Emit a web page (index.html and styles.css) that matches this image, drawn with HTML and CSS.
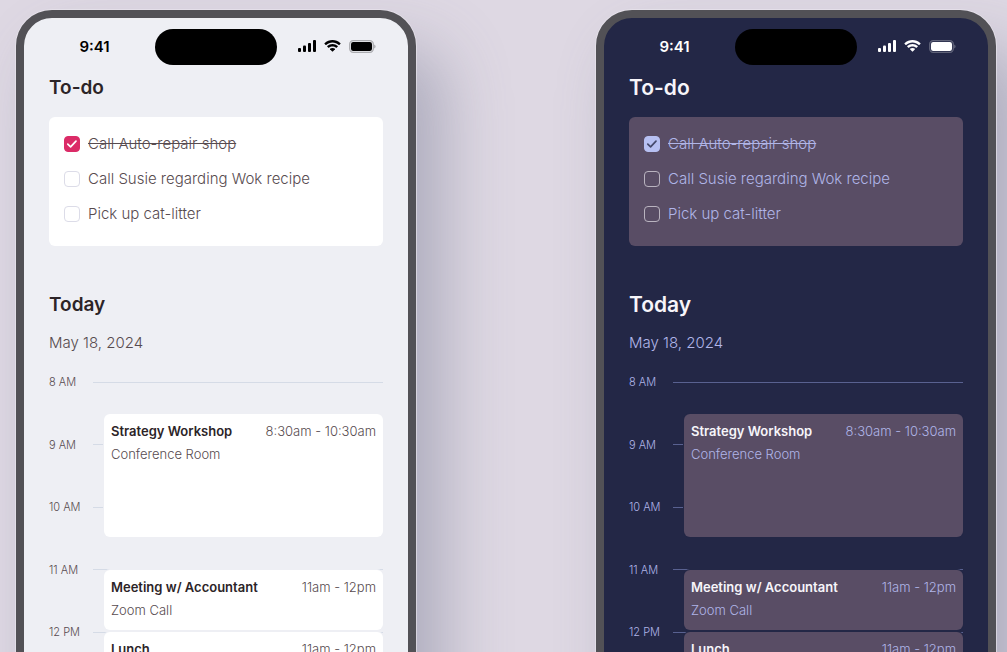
FILE: index.html
```html
<!DOCTYPE html>
<html lang="en">
<head>
<meta charset="utf-8">
<meta name="viewport" content="width=device-width, initial-scale=1">
<title>To-do and calendar</title>
<link rel="stylesheet" href="styles.css">
</head>
<body>
<svg class="sprite" aria-hidden="true">
  <symbol id="signal" viewBox="0 0 18 12">
    <rect x="0" y="8" width="3" height="4" rx="1"/><rect x="5" y="5.5" width="3" height="6.5" rx="1"/><rect x="10" y="3" width="3" height="9" rx="1"/><rect x="15" y="0" width="3" height="12" rx="1"/>
  </symbol>
  <symbol id="wifi" viewBox="0 0 17 12">
    <path d="M8.5 2.5c2.4 0 4.6.9 6.3 2.5.1.1.3.1.5 0l1.2-1.2c.2-.2.2-.4 0-.6C12-1 5-1 .5 3.2c-.2.2-.2.4 0 .6L1.700 5c.2.1.4.1.5 0 1.700-1.600 3.900-2.500 6.300-2.500z"/>
    <path d="M8.500 6.400c1.300 0 2.600.5 3.600 1.400.1.1.3.1.5 0l1.200-1.200c.2-.2.200-.4 0-.6-3-2.800-7.600-2.800-10.600 0-.2.2-.2.4 0 .6l1.200 1.200c.1.1.3.1.5 0 1-.9 2.300-1.400 3.600-1.400z"/>
    <path d="M11 9.300c.1-.2.1-.4 0-.5-1.400-1.200-3.500-1.200-5 0-.1.100-.1.3 0 .5l2.200 2.200c.2.200.400.200.6 0z"/>
  </symbol>
  <symbol id="battery" viewBox="0 0 27 13">
    <rect x="0.7" y="0.7" width="23.600" height="11.600" rx="3.500" fill="none" stroke="currentColor" stroke-width="1.300" opacity=".28"/>
    <rect x="2" y="2" width="21" height="9" rx="2.200"/>
    <path d="M25.300 4.500v4c1.600-.7 1.600-3.300 0-4z" opacity=".35"/>
  </symbol>
  <symbol id="check" viewBox="0 0 16 16">
    <path d="M3.800 8.200l2.800 2.600 5.400-5.600" fill="none" stroke="currentColor" stroke-width="1.700" stroke-linecap="round" stroke-linejoin="round"/>
  </symbol>
</svg>
<main class="stage">
  <section class="phone light">
    <header class="status">
      <span class="time">9:41</span>
      <span class="island"></span>
      <span class="indicators">
        <svg class="signal"><use href="#signal"/></svg>
        <svg class="wifi"><use href="#wifi"/></svg>
        <svg class="battery"><use href="#battery"/></svg>
      </span>
    </header>
    <div class="content">
      <h2 class="heading">To-do</h2>
      <div class="todos">
        <label class="todo"><input class="box" type="checkbox" checked><svg class="check"><use href="#check"/></svg><span class="task">Call Auto-repair shop</span></label>
        <label class="todo"><input class="box" type="checkbox"><svg class="check"><use href="#check"/></svg><span class="task">Call Susie regarding Wok recipe</span></label>
        <label class="todo"><input class="box" type="checkbox"><svg class="check"><use href="#check"/></svg><span class="task">Pick up cat-litter</span></label>
      </div>
      <h2 class="heading">Today</h2>
      <p class="date">May 18, 2024</p>
      <div class="timeline">
        <div class="hour h8">8 AM</div>
        <div class="hour h9">9 AM</div>
        <div class="hour h10">10 AM</div>
        <div class="hour h11">11 AM</div>
        <div class="hour h12">12 PM</div>
        <article class="event workshop"><div class="event-top"><h3 class="title">Strategy Workshop</h3><span class="when">8:30am - 10:30am</span></div><p class="place">Conference Room</p></article>
        <article class="event meeting"><div class="event-top"><h3 class="title">Meeting w/ Accountant</h3><span class="when">11am - 12pm</span></div><p class="place">Zoom Call</p></article>
        <article class="event lunch"><div class="event-top"><h3 class="title">Lunch</h3><span class="when">11am - 12pm</span></div></article>
      </div>
    </div>
  </section>
  <section class="phone dark">
    <header class="status">
      <span class="time">9:41</span>
      <span class="island"></span>
      <span class="indicators">
        <svg class="signal"><use href="#signal"/></svg>
        <svg class="wifi"><use href="#wifi"/></svg>
        <svg class="battery"><use href="#battery"/></svg>
      </span>
    </header>
    <div class="content">
      <h2 class="heading">To-do</h2>
      <div class="todos">
        <label class="todo"><input class="box" type="checkbox" checked><svg class="check"><use href="#check"/></svg><span class="task">Call Auto-repair shop</span></label>
        <label class="todo"><input class="box" type="checkbox"><svg class="check"><use href="#check"/></svg><span class="task">Call Susie regarding Wok recipe</span></label>
        <label class="todo"><input class="box" type="checkbox"><svg class="check"><use href="#check"/></svg><span class="task">Pick up cat-litter</span></label>
      </div>
      <h2 class="heading">Today</h2>
      <p class="date">May 18, 2024</p>
      <div class="timeline">
        <div class="hour h8">8 AM</div>
        <div class="hour h9">9 AM</div>
        <div class="hour h10">10 AM</div>
        <div class="hour h11">11 AM</div>
        <div class="hour h12">12 PM</div>
        <article class="event workshop"><div class="event-top"><h3 class="title">Strategy Workshop</h3><span class="when">8:30am - 10:30am</span></div><p class="place">Conference Room</p></article>
        <article class="event meeting"><div class="event-top"><h3 class="title">Meeting w/ Accountant</h3><span class="when">11am - 12pm</span></div><p class="place">Zoom Call</p></article>
        <article class="event lunch"><div class="event-top"><h3 class="title">Lunch</h3><span class="when">11am - 12pm</span></div></article>
      </div>
    </div>
  </section>
</main>
</body>
</html>
```

FILE: styles.css
```css
* { box-sizing: border-box; }

body {
  margin: 0;
  height: 100vh;
  overflow: hidden;
  background: #ded8e3;
  font-family: Inter, "Liberation Sans", sans-serif;
}

h2, h3, p { margin: 0; }

.sprite { display: none; }

.stage {
  display: flex;
  align-items: flex-start;
  gap: 180px;
  padding: 10px 11px 0 16px;
}

.phone {
  flex: 1;
  min-width: 0;
  border: 8px solid #525156;
  border-radius: 36px;
  background: var(--screen);
  color: var(--text);
  font-weight: 300;
  box-shadow: 0 0 0 1px #ebe8ef99, 28px 40px 64px #70758e70;
}

.light {
  --screen: #eeeff4;
  --card: #ffffff;
  --strong: #2c2427;
  --text: #574b4f;
  --line: #d5dbe6;
  --status: #000000;
  --box-line: #dcdce8;
  --accent: #db2b67;
  --mark: #ffffff;
  --heading-size: 19px;
}

.dark {
  --screen: #232746;
  --card: #594d65;
  --strong: #f7f5fa;
  --text: #b0b5e8;
  --line: #596190;
  --status: #ffffff;
  --box-line: #b9b3bf;
  --accent: #b7c0f2;
  --mark: #45496b;
  --heading-size: 21px;
}

.status {
  display: grid;
  grid-template-columns: 1fr 122px 1fr;
  align-items: center;
  padding-top: 11px;
  color: var(--status);
}

.time {
  padding: 0 0 2px 10px;
  text-align: center;
  font-size: 15px;
  font-weight: 600;
}

.island {
  height: 36px;
  border-radius: 18px;
  background: #000;
}

.indicators {
  display: flex;
  justify-content: center;
  align-items: center;
  gap: 8px;
  padding: 0 12px 2px 0;
  fill: currentColor;
}

.signal { width: 18px; height: 12px; }
.wifi { width: 17px; height: 12px; }
.battery { width: 27px; height: 13px; }

.content { padding: 9px 25px 0; }

.heading {
  color: var(--strong);
  font-size: var(--heading-size);
  font-weight: 600;
  line-height: 28px;
}

.todos {
  display: flex;
  flex-direction: column;
  gap: 13px;
  margin: 15px 0 45px;
  padding: 16px 15px 21px;
  border-radius: 6px;
  background: var(--card);
}

.todo {
  display: grid;
  grid-template-columns: 16px 1fr;
  column-gap: 8px;
  align-items: center;
  font-size: 15px;
  line-height: 22px;
}

.box {
  grid-area: 1 / 1;
  appearance: none;
  width: 16px;
  height: 16px;
  margin: 0;
  border: 1px solid var(--box-line);
  border-radius: 4px;
}

.box:checked {
  border-color: var(--accent);
  background: var(--accent);
}

.check {
  grid-area: 1 / 1;
  width: 16px;
  height: 16px;
  color: var(--mark);
  visibility: hidden;
  pointer-events: none;
}

.box:checked + .check { visibility: visible; }
.box:checked ~ .task { text-decoration: line-through; }

.date {
  margin-top: 13px;
  font-size: 15px;
  line-height: 22px;
}

.timeline {
  display: grid;
  grid-template-columns: 55px 1fr;
  grid-template-rows: repeat(12, 1fr);
  height: 375px;
  margin-top: -3px;
}

.hour {
  display: grid;
  grid-template-columns: 44px 1fr;
  grid-column: 1 / -1;
  align-items: center;
  font-size: 11px;
}

.hour::after {
  content: "";
  height: 1px;
  background: var(--line);
}

.h8 { grid-row: 1 / span 2; }
.h9 { grid-row: 3 / span 2; }
.h10 { grid-row: 5 / span 2; }
.h11 { grid-row: 7 / span 2; }
.h12 { grid-row: 9 / span 2; }

.event {
  grid-column: 2;
  margin-bottom: 2px;
  padding: 6px 7px;
  border-radius: 6px;
  background: var(--card);
  box-shadow: 0 0 0 1px var(--screen);
  font-size: 13px;
  line-height: 23px;
}

.workshop { grid-row: 3 / 7; }
.meeting { grid-row: 8 / 10; }
.lunch { grid-row: 10 / 12; }

.event-top {
  display: flex;
  justify-content: space-between;
}

.title {
  color: var(--strong);
  font-size: 13px;
  font-weight: 600;
}
```
